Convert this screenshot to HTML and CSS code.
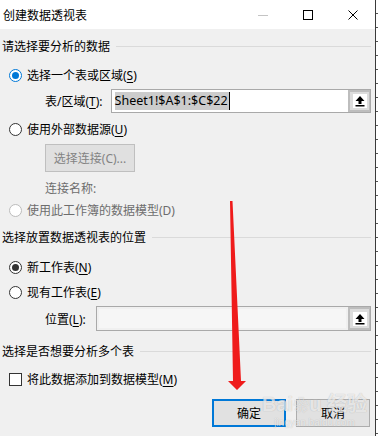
FILE: index.html
```html
<!DOCTYPE html>
<html lang="zh-CN">
<head>
    <meta charset="UTF-8">
    <meta name="viewport" content="width=device-width, initial-scale=1.0">
    <title>创建数据透视表</title>
    <link rel="stylesheet" href="styles.css">
</head>
<body>
    <div class="screen">
        <div class="dialog">
            <div class="titlebar">
                <span class="title">创建数据透视表</span>
                <div class="controls">
                    <span class="ctl">
                        <svg width="10" height="10" viewBox="0 0 10 10"><rect x="0" y="5" width="10" height="1" fill="#c4c4c4"/></svg>
                    </span>
                    <span class="ctl">
                        <svg width="10" height="10" viewBox="0 0 10 10"><rect x="0.5" y="0.5" width="9" height="9" fill="none" stroke="#000"/></svg>
                    </span>
                    <span class="ctl">
                        <svg width="10" height="10" viewBox="0 0 10 10"><path d="M0.5 0.5 L9.5 9.5 M9.5 0.5 L0.5 9.5" stroke="#000" stroke-width="1"/></svg>
                    </span>
                </div>
            </div>

            <div class="content">
                <!-- 1. source -->
                <div class="heading h-source"><span>请选择要分析的数据</span><i class="rule"></i></div>

                <label class="option row-range-radio">
                    <span class="radio blue"></span><span>选择一个表或区域(<u>S</u>)</span>
                </label>

                <div class="field row-range">
                    <span class="field-label">表/区域(<u>T</u>):</span>
                    <div class="input">
                        <span class="input-text"><span class="sel">Sheet1!$A$1:$C$22</span><span class="caret"></span></span>
                        <span class="pick">
                            <span class="pick-icon">
                                <svg width="14" height="14" viewBox="0 0 14 14"><path d="M7 2 L11.5 7 L8.5 7 L8.5 10 L5.5 10 L5.5 7 L2.5 7 Z" fill="#000"/><rect x="2.5" y="11" width="9" height="1.5" fill="#000"/></svg>
                            </span>
                        </span>
                    </div>
                </div>

                <label class="option row-external">
                    <span class="radio"></span><span>使用外部数据源(<u>U</u>)</span>
                </label>

                <div class="indent row-connect">
                    <span class="btn btn-disabled">选择连接(C)...</span>
                </div>

                <div class="indent row-connname muted">连接名称:</div>

                <label class="option row-model muted">
                    <span class="radio disabled"></span><span>使用此工作簿的数据模型(D)</span>
                </label>

                <!-- 2. destination -->
                <div class="heading h-place"><span>选择放置数据透视表的位置</span><i class="rule"></i></div>

                <label class="option row-new">
                    <span class="radio dark"></span><span>新工作表(<u>N</u>)</span>
                </label>

                <label class="option row-existing">
                    <span class="radio"></span><span>现有工作表(<u>E</u>)</span>
                </label>

                <div class="field row-location">
                    <span class="field-label">位置(<u>L</u>):</span>
                    <div class="input input-off">
                        <span class="input-text"><span class="input-well"></span></span>
                        <span class="pick">
                            <span class="pick-icon">
                                <svg width="14" height="14" viewBox="0 0 14 14"><path d="M7 2 L11.5 7 L8.5 7 L8.5 10 L5.5 10 L5.5 7 L2.5 7 Z" fill="#000"/><rect x="2.5" y="11" width="9" height="1.5" fill="#000"/></svg>
                            </span>
                        </span>
                    </div>
                </div>

                <!-- 3. multiple tables -->
                <div class="heading h-multi"><span>选择是否想要分析多个表</span><i class="rule"></i></div>

                <label class="option row-check">
                    <span class="check"></span><span>将此数据添加到数据模型(<u>M</u>)</span>
                </label>

                <div class="actions">
                    <span class="btn btn-default">确定</span>
                    <span class="btn">取消</span>
                </div>
            </div>
        </div>
        <div class="sheet-edge"></div>

        <svg class="red-arrow" width="379" height="436" viewBox="0 0 379 436">
            <polygon points="230,201 232.5,201 241,381 246,381 237,390 228,381 233,381" fill="#ef1b1b"/>
        </svg>

        <div class="watermark">
            <span class="wm-logo">Bai<b>❀</b>u 经验</span>
            <span class="wm-url">jingyan.baidu.com</span>
        </div>
    </div>
</body>
</html>
```

FILE: styles.css
```css
body {
    margin: 0;
    font-family: "Noto Sans", "Noto Sans CJK SC", sans-serif;
    font-size: 12px;
    color: #000;
    background: #fff;
}

.screen {
    position: relative;
    width: 379px;
    height: 436px;
    overflow: hidden;
    display: flex;
}

.dialog {
    width: 375px;
    display: flex;
    flex-direction: column;
    background: #f0f0f0;
}

/* title bar */
.titlebar {
    height: 29px;
    background: #fff;
    display: flex;
    align-items: center;
    padding-left: 3px;
}

.title {
    flex: 1;
    font-size: 12px;
}

.controls {
    display: flex;
}

.ctl {
    width: 45px;
    height: 29px;
    display: flex;
    align-items: center;
    justify-content: center;
}

/* body */
.content {
    flex: 1;
    display: flex;
    flex-direction: column;
    padding: 0 4px 0 2px;
}

.heading {
    display: flex;
    align-items: center;
    gap: 6px;
    white-space: nowrap;
}

.heading .rule {
    flex: 1;
    border-top: 1px solid #dadada;
}

.h-source { height: 34px; }
.h-place { height: 34px; }
.h-multi { height: 36px; }

.option {
    display: flex;
    align-items: center;
    gap: 5px;
    padding-left: 7px;
    white-space: nowrap;
}

.row-range-radio { height: 24px; }
.row-external { height: 28px; }
.row-model { height: 20px; }
.row-new { height: 26px; }
.row-existing { height: 24px; }
.row-check { height: 20px; }

u {
    text-decoration: underline;
    text-underline-offset: 2px;
}

.muted {
    color: #6d6d6d;
}

.radio {
    box-sizing: border-box;
    width: 13px;
    height: 13px;
    border: 1px solid #333;
    border-radius: 50%;
    background: #fff;
    display: flex;
    align-items: center;
    justify-content: center;
}

.radio.blue {
    border-color: #0078d7;
}

.radio.blue::after,
.radio.dark::after {
    content: "";
    width: 7px;
    height: 7px;
    border-radius: 50%;
    background: #0078d7;
}

.radio.dark::after {
    background: #333;
}

.radio.disabled {
    border-color: #bcbcbc;
}

.check {
    box-sizing: border-box;
    width: 13px;
    height: 13px;
    border: 1px solid #333;
    background: #fff;
}

/* text fields */
.field {
    display: flex;
    align-items: center;
    padding-left: 43px;
}

.row-range { height: 28px; gap: 8px; }
.row-location { height: 29px; gap: 10px; }

.input {
    flex: 1;
    height: 24px;
    box-sizing: border-box;
    border: 1px solid #a9a9a9;
    background: #fff;
    display: flex;
}

.input-off {
    height: 25px;
    background: #f0f0f0;
}

.input-text {
    flex: 1;
    display: flex;
    align-items: center;
    padding-left: 3px;
}

.sel {
    background: #cccccc;
    font-size: 12.5px;
    line-height: 18px;
    padding-right: 1px;
}

.caret {
    width: 1px;
    height: 18px;
    background: #000;
}

.input-well {
    flex: 1;
    align-self: stretch;
    margin: 2px 2px 2px -1px;
    background: #f6f6f6;
}

.pick {
    width: 22px;
    box-sizing: border-box;
    border: 2px solid #bdbdbd;
    border-right-width: 1px;
    background: #dcdcdc;
    display: flex;
    align-items: center;
    justify-content: center;
}

.pick-icon {
    width: 14px;
    height: 14px;
    background: #fff;
    display: flex;
}

/* buttons */
.indent {
    padding-left: 43px;
}

.row-connect {
    height: 33px;
    display: flex;
    align-items: flex-start;
    padding-top: 1px;
    box-sizing: border-box;
}

.row-connname {
    height: 24px;
    display: flex;
    align-items: center;
}

.btn {
    box-sizing: border-box;
    width: 74px;
    height: 28px;
    border: 1px solid #adadad;
    background: #e1e1e1;
    display: flex;
    align-items: center;
    justify-content: center;
}

.btn-disabled {
    width: 90px;
    border-color: #bfbfbf;
    background: #e0e0e0;
    color: #838383;
}

.btn-default {
    border: 2px solid #0078d7;
}

.actions {
    display: flex;
    justify-content: flex-end;
    gap: 10px;
    padding-top: 10px;
    padding-right: 1px;
}

/* excel sheet peeking at the right */
.sheet-edge {
    width: 4px;
    box-sizing: border-box;
    border-left: 1px solid #3a3a3a;
    background: repeating-linear-gradient(to bottom, #fff 0, #fff 13px, #555 13px, #555 14px);
    background-size: 2px 14px;
    background-repeat: repeat-y;
    background-color: #fff;
}

/* overlays */
.red-arrow {
    position: absolute;
    left: 0;
    top: 0;
    pointer-events: none;
}

.watermark {
    position: absolute;
    left: 262px;
    top: 393px;
    display: flex;
    flex-direction: column;
    align-items: center;
    color: rgba(255, 255, 255, 0.7);
    text-shadow: 0 0 1px rgba(0, 0, 0, 0.25);
    pointer-events: none;
}

.wm-logo {
    font-family: "Liberation Sans", "Noto Sans CJK SC", sans-serif;
    font-size: 20px;
    font-weight: bold;
    line-height: 22px;
}

.wm-logo b {
    font-size: 16px;
}

.wm-url {
    font-family: "Liberation Sans", sans-serif;
    font-size: 10px;
    line-height: 12px;
}
```
